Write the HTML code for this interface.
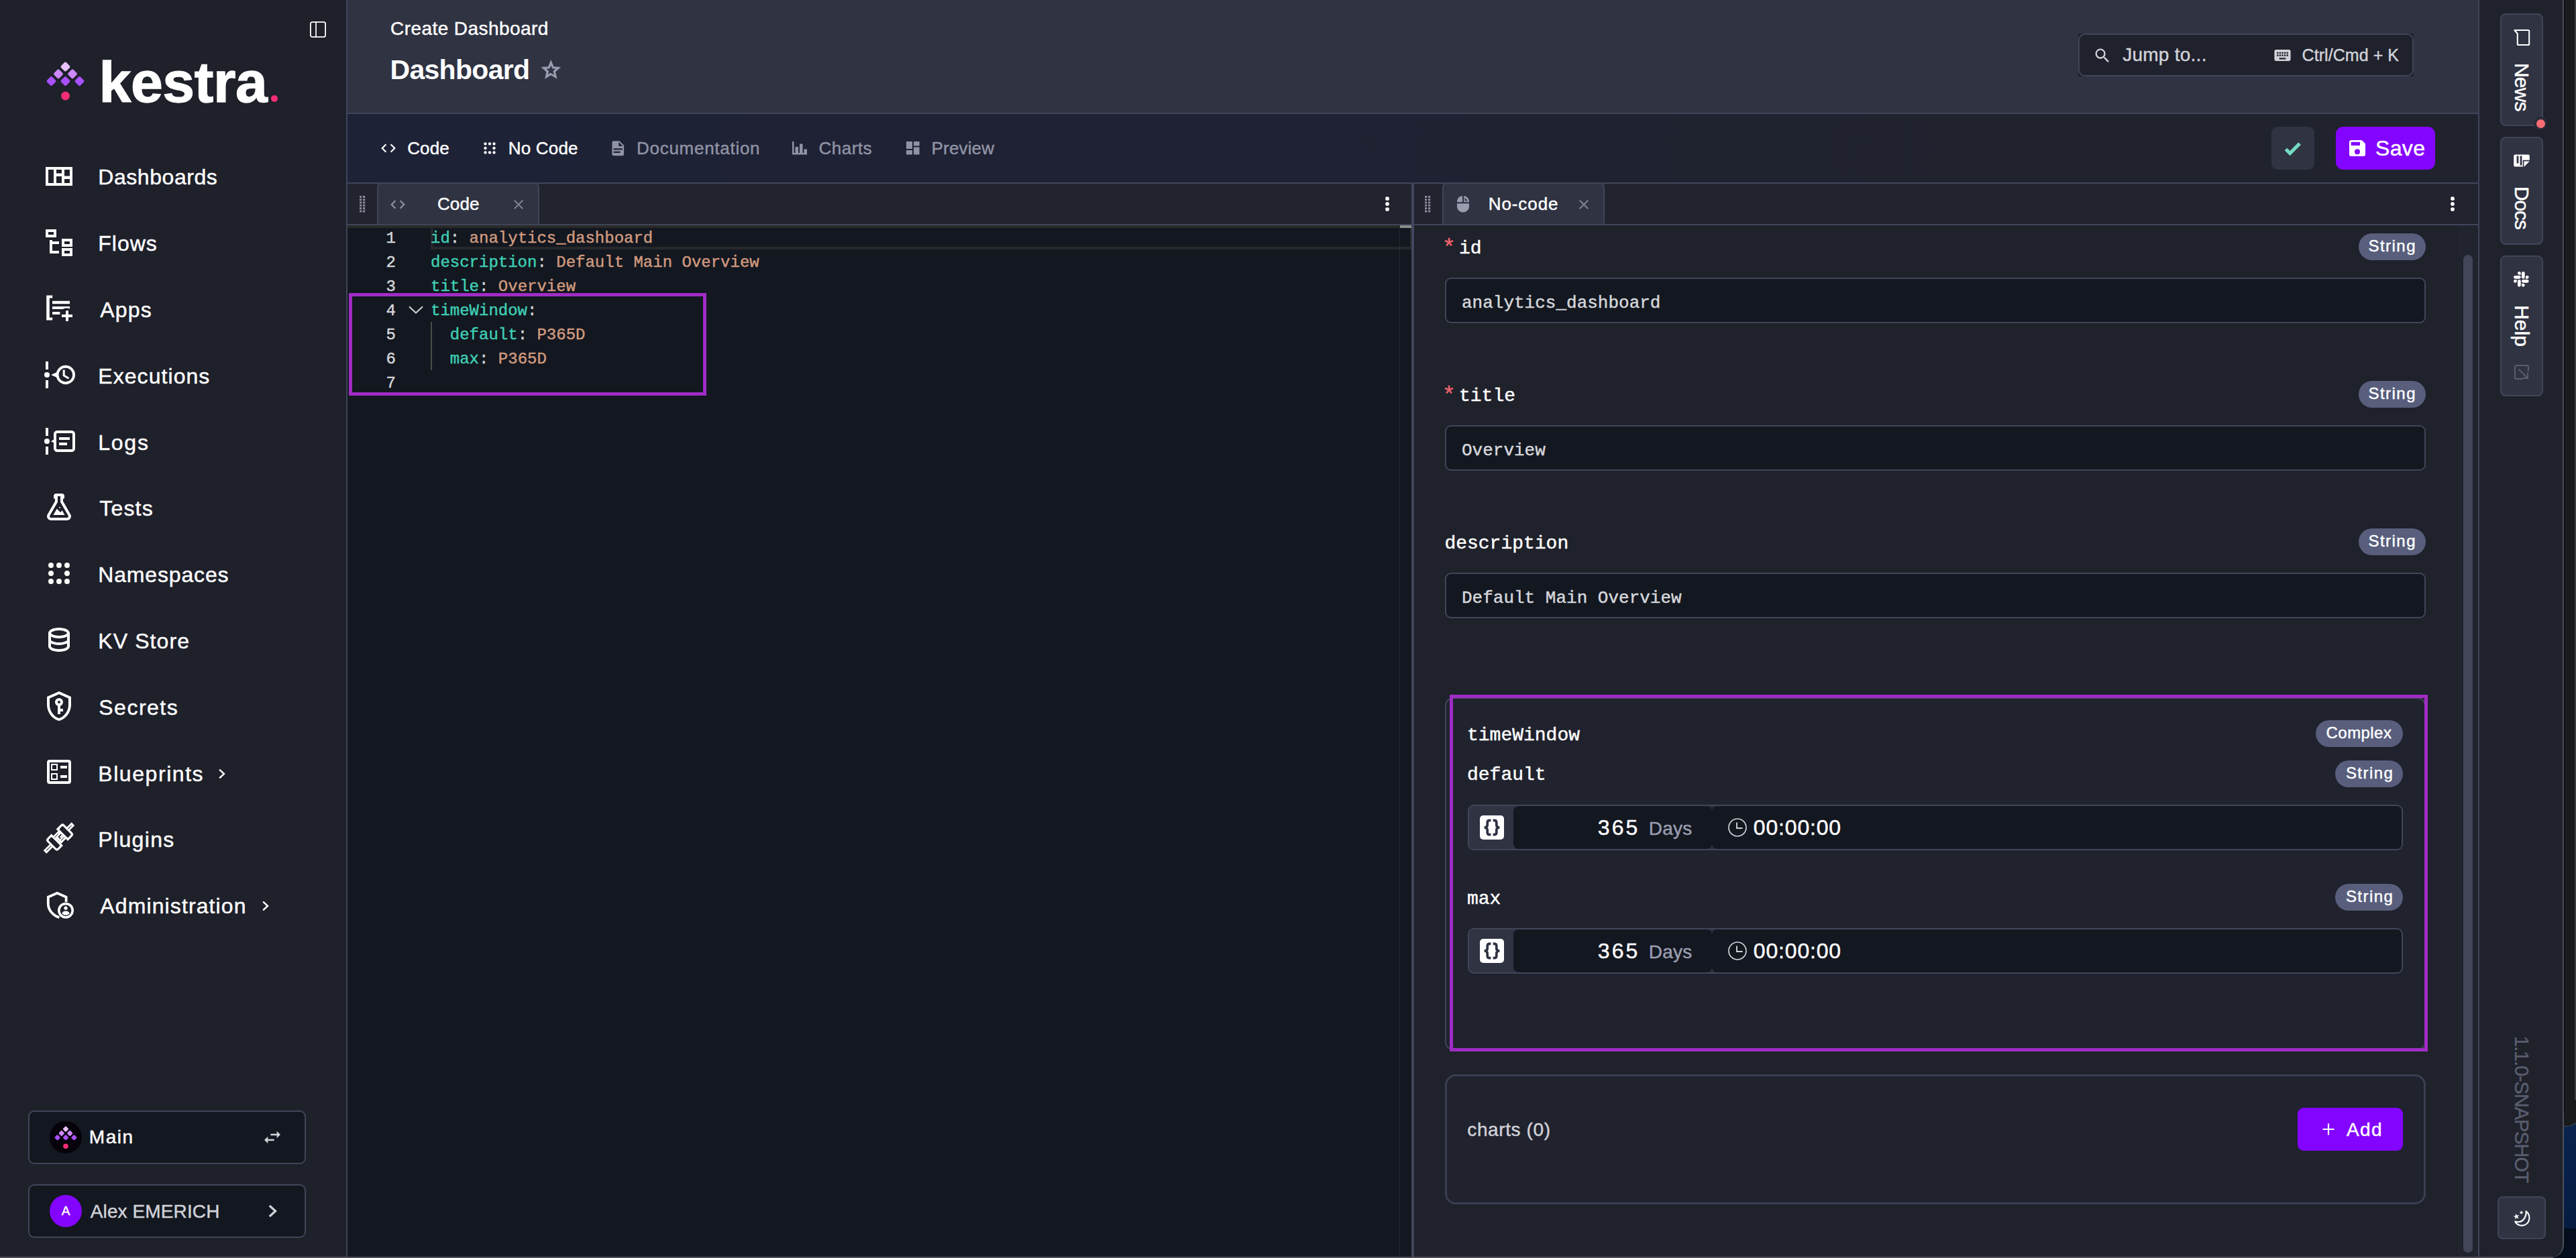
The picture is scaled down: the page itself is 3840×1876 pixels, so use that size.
<!DOCTYPE html>
<html lang="en"><head><meta charset="utf-8"><title>Create Dashboard - Kestra</title>
<style>
html,body{margin:0;padding:0}
body{width:3840px;height:1876px;position:relative;overflow:hidden;background:#1e202a;font-family:"Liberation Sans",sans-serif;}
body div,body span,body svg{position:absolute;box-sizing:border-box}
span{white-space:pre;-webkit-text-stroke:0.45px}
.code span{position:static}
</style></head><body>
<div style="left:0px;top:0px;width:516px;height:1876px;background:#1e202a"></div>
<div style="left:516px;top:0px;width:2px;height:1876px;background:#404559"></div>
<div style="left:518px;top:0px;width:3176px;height:168px;background:#2f3342"></div>
<div style="left:518px;top:168px;width:3176px;height:2px;background:#404559"></div>
<div style="left:518px;top:170px;width:3176px;height:102px;background:linear-gradient(90deg,#1e2236 0%,#1f2233 45%,#20222e 75%)"></div>
<div style="left:518px;top:272px;width:3176px;height:2px;background:#404559"></div>
<div style="left:518px;top:274px;width:3176px;height:60px;background:#21232f"></div>
<div style="left:518px;top:334px;width:3176px;height:2px;background:#404559"></div>
<div style="left:518px;top:336px;width:1586px;height:1538px;background:#131720"></div>
<div style="left:2104px;top:274px;width:4px;height:1600px;background:#41465c"></div>
<div style="left:2108px;top:336px;width:1586px;height:1538px;background:#1f212b"></div>
<div style="left:3664px;top:336px;width:30px;height:1538px;background:#21232e"></div>
<div style="left:3694px;top:0px;width:2px;height:1876px;background:#404559"></div>
<div style="left:3780px;top:0px;width:60px;height:1876px;background:linear-gradient(180deg,#09244f 0%,#09244f 89%,#061c42 97.5%)"></div>
<div style="left:3780px;top:1832px;width:60px;height:44px;background:#040d1b"></div>
<div style="left:3800px;top:0px;width:48px;height:1680px;background:#171b1e;border-radius:0 0 22px 0;border:1px solid #46494c;border-top:0"></div>
<div style="left:3822px;top:0px;width:1px;height:1660px;background:#000"></div>
<div style="left:3838px;top:0px;width:2px;height:1640px;background:#3a3d3f"></div>
<div style="left:3696px;top:0px;width:126px;height:1876px;background:#1f212b;border-radius:0 0 20px 0;border-right:2px solid #4d505b"></div>
<div style="left:0px;top:1874px;width:3806px;height:2px;background:#4c4e59"></div>
<svg style="left:462px;top:32px;" width="24" height="24" viewBox="0 0 24 24"><rect x="0.9" y="0.9" width="22.2" height="22.2" rx="2.6" fill="none" stroke="#fff" stroke-width="1.8"/><rect x="8.2" y="1" width="1.7" height="22" fill="#fff"/></svg>
<svg style="left:60px;top:80px;" width="80" height="80" viewBox="0 0 80 80"><rect x="31.98" y="14.08" width="11.03" height="11.03" rx="2.2" fill="#e9c1ff" transform="rotate(45 37.5 19.6)"/><rect x="21.48" y="24.78" width="11.03" height="11.03" rx="2.2" fill="#cd88ff" transform="rotate(45 27.0 30.3)"/><rect x="42.48" y="24.78" width="11.03" height="11.03" rx="2.2" fill="#cd88ff" transform="rotate(45 48.0 30.3)"/><rect x="10.98" y="35.48" width="11.03" height="11.03" rx="2.2" fill="#a950ff" transform="rotate(45 16.5 41.0)"/><rect x="31.98" y="35.48" width="11.03" height="11.03" rx="2.2" fill="#a950ff" transform="rotate(45 37.5 41.0)"/><rect x="52.98" y="35.48" width="11.03" height="11.03" rx="2.2" fill="#a950ff" transform="rotate(45 58.5 41.0)"/><circle cx="37.5" cy="63.0" r="6.40" fill="#f62e76"/></svg>
<span style="left:147.60px;top:79.20px;font-size:86px;line-height:86px;color:#ffffff;font-weight:700;-webkit-text-stroke:0;letter-spacing:-0.440px;-webkit-text-stroke:1.3px #fff;">kestra</span>
<div style="left:403.5px;top:141.7px;width:10.6px;height:10.6px;background:#f62e76;border-radius:50%"></div>
<span style="left:146.30px;top:248.41px;font-size:32px;line-height:32px;color:#ffffff;letter-spacing:0.556px;">Dashboards</span>
<span style="left:146.30px;top:347.21px;font-size:32px;line-height:32px;color:#ffffff;letter-spacing:1.000px;">Flows</span>
<span style="left:149.30px;top:446.01px;font-size:32px;line-height:32px;color:#ffffff;letter-spacing:1.200px;">Apps</span>
<span style="left:146.30px;top:544.81px;font-size:32px;line-height:32px;color:#ffffff;letter-spacing:1.056px;">Executions</span>
<span style="left:146.30px;top:643.61px;font-size:32px;line-height:32px;color:#ffffff;letter-spacing:1.733px;">Logs</span>
<span style="left:148.30px;top:742.41px;font-size:32px;line-height:32px;color:#ffffff;letter-spacing:1.175px;">Tests</span>
<span style="left:146.30px;top:841.21px;font-size:32px;line-height:32px;color:#ffffff;letter-spacing:0.833px;">Namespaces</span>
<span style="left:146.30px;top:940.01px;font-size:32px;line-height:32px;color:#ffffff;letter-spacing:1.100px;">KV Store</span>
<span style="left:147.30px;top:1038.81px;font-size:32px;line-height:32px;color:#ffffff;letter-spacing:1.483px;">Secrets</span>
<span style="left:146.30px;top:1137.61px;font-size:32px;line-height:32px;color:#ffffff;letter-spacing:1.556px;">Blueprints</span>
<span style="left:146.30px;top:1236.41px;font-size:32px;line-height:32px;color:#ffffff;letter-spacing:1.350px;">Plugins</span>
<span style="left:149.30px;top:1335.21px;font-size:32px;line-height:32px;color:#ffffff;letter-spacing:1.115px;">Administration</span>
<svg style="left:326px;top:1146px;" width="10" height="16" viewBox="0 0 10 15"><path d="M1.2 1.2L8 7.5L1.2 13.8" fill="none" stroke="#fff" stroke-width="2.4"/></svg>
<svg style="left:391px;top:1343px;" width="10" height="16" viewBox="0 0 10 15"><path d="M1.2 1.2L8 7.5L1.2 13.8" fill="none" stroke="#fff" stroke-width="2.4"/></svg>
<svg style="left:64px;top:238.90px" width="48" height="48" viewBox="0 0 24 24" fill="#fff"><path fill-rule="evenodd" d="M2 5H22V19H2ZM4 7V17H8V7ZM10 7V9.8H14V7ZM10 12V17H14V12ZM16 7V11.7H20V7ZM16 14V17H20V14Z"/></svg>
<svg style="left:64px;top:337.60px" width="48" height="48" viewBox="0 0 24 24" fill="#fff"><path d="M12 13H7V18H12V20H5V10H7V11H12V13M8 4V6H4V4H8M10 2H2V8H10V2M20 11V13H16V11H20M22 9H14V15H22V9M20 18V20H16V18H20M22 16H14V22H22V16Z"/></svg>
<svg style="left:64px;top:436.30px" width="48" height="48" viewBox="0 0 24 24" fill="#fff"><path d="M2.6 2.3H7.1V4.3H4.9V18.7H7.1V20.7H2.6Z"/><rect x="7" y="6.4" width="13" height="2.2"/><rect x="7" y="10.5" width="13" height="2"/><rect x="7" y="14.5" width="5.7" height="2"/><path d="M17 13.5H19V16.5H22V18.5H19V21.5H17V18.5H14V16.5H17Z"/><path d="M13.2 14.4 A5 5 0 0 1 20 12.3 L20 13 L13.2 15Z" fill="#1e202a"/></svg>
<svg style="left:64px;top:535.00px" width="48" height="48" viewBox="0 0 24 24" fill="#fff"><rect x="2" y="2" width="2" height="6"/><rect x="2" y="16" width="2" height="6"/><circle cx="3" cy="12" r="2"/><circle cx="16.9" cy="12" r="6.1" fill="none" stroke="#fff" stroke-width="2"/><path d="M6 12L10.4 10V14Z"/><circle cx="16.9" cy="12" r="5.1" fill="#1e202a"/><path d="M15.6 8.2V12.5L19.2 14.6" fill="none" stroke="#fff" stroke-width="1.5"/></svg>
<svg style="left:64px;top:633.70px" width="48" height="48" viewBox="0 0 24 24" fill="#fff"><rect x="2" y="2" width="2" height="6"/><rect x="2" y="16" width="2" height="6"/><circle cx="3" cy="12" r="2"/><path d="M6 12L9 10.3V13.7Z"/><rect x="9" y="5" width="14" height="14" rx="1.6" fill="#1e202a" stroke="#fff" stroke-width="2"/><rect x="12" y="9" width="8" height="2"/><rect x="12" y="13" width="6" height="2"/></svg>
<svg style="left:64px;top:732.40px" width="48" height="48" viewBox="0 0 24 24" fill="#fff"><path d="M5,19A1,1 0 0,0 6,20H18A1,1 0 0,0 19,19C19,18.79 18.93,18.59 18.82,18.43L13,8.35V4H11V8.35L5.18,18.43C5.07,18.59 5,18.79 5,19M6,22A3,3 0 0,1 3,19C3,18.4 3.18,17.84 3.5,17.37L9,7.81V6A1,1 0 0,1 8,5V4A2,2 0 0,1 10,2H14A2,2 0 0,1 16,4V5A1,1 0 0,1 15,6V7.81L20.5,17.37C20.82,17.84 21,18.4 21,19A3,3 0 0,1 18,22H6M13,16L14.34,14.66L16.27,18H7.73L10.39,13.39L13,16M12.5,12A0.5,0.5 0 0,1 13,12.5A0.5,0.5 0 0,1 12.5,13A0.5,0.5 0 0,1 12,12.5A0.5,0.5 0 0,1 12.5,12Z"/></svg>
<svg style="left:64px;top:831.10px" width="48" height="48" viewBox="0 0 24 24" fill="#fff"><circle cx="6" cy="6" r="2"/><circle cx="6" cy="12" r="2"/><circle cx="6" cy="18" r="2"/><circle cx="12" cy="6" r="2"/><circle cx="12" cy="18" r="2"/><circle cx="18" cy="6" r="2"/><circle cx="18" cy="12" r="2"/><circle cx="18" cy="18" r="2"/></svg>
<svg style="left:64px;top:929.80px" width="48" height="48" viewBox="0 0 24 24" fill="#fff"><path d="M12 3C7.58 3 4 4.79 4 7V17C4 19.21 7.59 21 12 21S20 19.21 20 17V7C20 4.79 16.42 3 12 3M18 17C18 17.5 15.87 19 12 19S6 17.5 6 17V14.77C7.61 15.55 9.72 16 12 16S16.39 15.55 18 14.77V17M18 12.45C16.7 13.4 14.42 14 12 14C9.58 14 7.3 13.4 6 12.45V9.64C7.47 10.47 9.61 11 12 11C14.39 11 16.53 10.47 18 9.64V12.45M12 9C8.13 9 6 7.5 6 7S8.13 5 12 5C15.87 5 18 6.5 18 7S15.87 9 12 9Z"/></svg>
<svg style="left:64px;top:1028.50px" width="48" height="48" viewBox="0 0 24 24" fill="#fff"><path d="M21,11C21,16.55 17.16,21.74 12,23C6.84,21.74 3,16.55 3,11V5L12,1L21,5V11M12,21C15.75,20 19,15.54 19,11.22V6.3L12,3.18L5,6.3V11.22C5,15.54 8.25,20 12,21M12,6A3,3 0 0,1 15,9C15,10.31 14.17,11.42 13,11.83V14H15V16H13V18H11V11.83C9.83,11.42 9,10.31 9,9A3,3 0 0,1 12,6M12,8A1,1 0 0,0 11,9A1,1 0 0,0 12,10A1,1 0 0,0 13,9A1,1 0 0,0 12,8Z"/></svg>
<svg style="left:64px;top:1127.20px" width="48" height="48" viewBox="0 0 24 24" fill="#fff"><path d="M13,7.5H18V9.5H13V7.5M13,14.5H18V16.5H13V14.5M19,3A2,2 0 0,1 21,5V19A2,2 0 0,1 19,21H5A2,2 0 0,1 3,19V5A2,2 0 0,1 5,3H19M19,19V5H5V19H19M11,6V11H6V6H11M10,10V7H7V10H10M11,13V18H6V13H11M10,17V14H7V17H10Z"/></svg>
<svg style="left:58px;top:1219.9px;" width="60" height="60" viewBox="0 0 60 60"><g transform="translate(29.8 29.8) rotate(-45)"><rect x="-29.4" y="-3.25" width="14" height="6.5" fill="#fff"/><rect x="-26.2" y="-0.45" width="10" height="0.9" fill="#1e202a"/><path d="M-12.5 -12.3H-3.4V12.3H-12.5A4 4 0 0 1 -16.5 8.3V-8.3A4 4 0 0 1 -12.5 -12.3Z" fill="#fff"/><rect x="-13.4" y="-9.2" width="6.9" height="18.4" rx="1.6" fill="#1e202a"/><rect x="-3.6" y="-8.2" width="10.2" height="5.9" fill="#fff"/><rect x="-3.6" y="2.3" width="10.2" height="5.9" fill="#fff"/><rect x="-3.6" y="-2.4" width="4.2" height="4.8" fill="#fff"/><rect x="-3.6" y="-5.6" width="7.4" height="0.8" fill="#1e202a"/><rect x="-0.4" y="4.4" width="6.8" height="0.8" fill="#1e202a"/><rect x="0.6" y="-1.6" width="3.6" height="3.2" fill="#1e202a"/><rect x="2" y="-0.6" width="4.6" height="2.9" fill="#fff"/><path d="M6.4 -12.3H16A4 4 0 0 1 20 -8.3V8.3A4 4 0 0 1 16 12.3H6.4Z" fill="#fff"/><rect x="9.6" y="-9.2" width="7.2" height="18.4" rx="1.6" fill="#1e202a"/><rect x="19.6" y="-3.25" width="10.3" height="6.5" fill="#fff"/><rect x="19.6" y="-0.45" width="7.4" height="0.9" fill="#1e202a"/></g></svg>
<svg style="left:64px;top:1324.60px" width="48" height="48" viewBox="0 0 24 24" fill="#fff"><path d="M12.2 21.6C8 20.4 3.9 16.4 3.9 11.4V6.4L10.6 3.4L17.3 6.4V10" fill="none" stroke="#fff" stroke-width="1.9"/><circle cx="17" cy="16.4" r="5.1" fill="#1e202a" stroke="#fff" stroke-width="1.8"/><circle cx="17" cy="14.6" r="1.3"/><path d="M14.2 18.6C14.6 17.2 15.8 16.8 17 16.8S19.4 17.2 19.8 18.6C19 19.5 18 19.9 17 19.9S15 19.5 14.2 18.6Z"/></svg>
<div style="left:42px;top:1656px;width:414px;height:80px;background:#131720;border:2px solid #404559;border-radius:9px"></div>
<div style="left:42px;top:1766px;width:414px;height:80px;background:#131720;border:2px solid #404559;border-radius:9px"></div>
<div style="left:74px;top:1672px;width:48px;height:48px;background:#05020a;border-radius:50%"></div>
<svg style="left:74px;top:1672px;" width="48" height="48" viewBox="0 0 48 48"><rect x="20.75" y="8.45" width="6.51" height="6.51" rx="1.298" fill="#e9c1ff" transform="rotate(45 24 11.7)"/><rect x="14.55" y="14.76" width="6.51" height="6.51" rx="1.298" fill="#cd88ff" transform="rotate(45 17.805 18.012999999999998)"/><rect x="26.94" y="14.76" width="6.51" height="6.51" rx="1.298" fill="#cd88ff" transform="rotate(45 30.195 18.012999999999998)"/><rect x="8.36" y="21.07" width="6.51" height="6.51" rx="1.298" fill="#a950ff" transform="rotate(45 11.610000000000001 24.325999999999997)"/><rect x="20.75" y="21.07" width="6.51" height="6.51" rx="1.298" fill="#a950ff" transform="rotate(45 24.0 24.325999999999997)"/><rect x="33.14" y="21.07" width="6.51" height="6.51" rx="1.298" fill="#a950ff" transform="rotate(45 36.39 24.325999999999997)"/><circle cx="24" cy="37.306" r="3.78" fill="#f62e76"/></svg>
<span style="left:132.80px;top:1682.30px;font-size:28px;line-height:28px;color:#ffffff;letter-spacing:1.567px;">Main</span>
<svg style="left:390px;top:1680px" width="32" height="32" viewBox="0 0 24 24"><path fill="#d1d2d8" d="M21,9L17,5V8H10V10H17V13M7,11L3,15L7,19V16H14V14H7V11Z"/></svg>
<div style="left:74px;top:1782px;width:48px;height:48px;background:#8405ff;border-radius:50%"></div>
<span style="left:91.80px;top:1796.22px;font-size:19px;line-height:19px;color:#ffffff;">A</span>
<span style="left:134.80px;top:1792.50px;font-size:28px;line-height:28px;color:#d1d2d8;letter-spacing:0.109px;">Alex EMERICH</span>
<svg style="left:400px;top:1796px;" width="14" height="20" viewBox="0 0 14 19.6"><path d="M1.8 1.8L10.6 9.8L1.8 17.8" fill="none" stroke="#d1d2d8" stroke-width="3.2"/></svg>
<span style="left:582.00px;top:28.50px;font-size:28px;line-height:28px;color:#ffffff;letter-spacing:0.433px;">Create Dashboard</span>
<span style="left:581.50px;top:83.99px;font-size:41px;line-height:41px;color:#ffffff;font-weight:700;-webkit-text-stroke:0;letter-spacing:-0.700px;">Dashboard</span>
<svg style="left:804.6px;top:87.5px" width="32.6" height="32.6" viewBox="0 0 24 24"><path fill="#9b9cb1" stroke="#9b9cb1" stroke-width="0.8" stroke-linejoin="miter" d="M12,15.39L8.24,17.66L9.23,13.38L5.91,10.5L10.29,10.13L12,6.09L13.71,10.13L18.09,10.5L14.77,13.38L15.76,17.66M22,9.24L14.81,8.63L12,2L9.19,8.63L2,9.24L7.45,13.97L5.82,21L12,17.27L18.18,21L16.54,13.97L22,9.24Z"/></svg>
<div style="left:3098px;top:50px;width:500px;height:64px;background:#1f212c"></div>
<div style="left:3098px;top:50px;width:500px;height:64px;border:2px solid #404559;border-radius:10px"></div>
<svg style="left:3120.00px;top:68.50px;" width="28" height="28" viewBox="0 0 24 24"><path fill="#d1d2d8" d="M9.5,3A6.5,6.5 0 0,1 16,9.5C16,11.11 15.41,12.59 14.44,13.73L14.71,14H15.5L20.5,19L19,20.5L14,15.5V14.71L13.73,14.44C12.59,15.41 11.11,16 9.5,16A6.5,6.5 0 0,1 3,9.5A6.5,6.5 0 0,1 9.5,3M9.5,5C7,5 5,7 5,9.5C5,12 7,14 9.5,14C12,14 14,12 14,9.5C14,7 12,5 9.5,5Z"/></svg>
<span style="left:3164.20px;top:68.30px;font-size:28px;line-height:28px;color:#d1d2d8;letter-spacing:0.256px;">Jump to...</span>
<svg style="left:3387.50px;top:67.50px;" width="29" height="29" viewBox="0 0 24 24"><path fill="#d1d2d8" d="M19,10H17V8H19M19,13H17V11H19M16,10H14V8H16M16,13H14V11H16M16,17H8V15H16M7,10H5V8H7M7,13H5V11H7M8,11H10V13H8M8,8H10V10H8M11,11H13V13H11M11,8H13V10H11M20,5H4C2.89,5 2,5.89 2,7V17A2,2 0 0,0 4,19H20A2,2 0 0,0 22,17V7C22,5.89 21.1,5 20,5Z"/></svg>
<span style="left:3431.60px;top:70.34px;font-size:25px;line-height:25px;color:#d1d2d8;letter-spacing:0.055px;">Ctrl/Cmd + K</span>
<svg style="left:565.80px;top:208.00px;" width="26" height="26" viewBox="0 0 24 24"><path fill="#ffffff" d="M14.6,16.6L19.2,12L14.6,7.4L16,6L22,12L16,18L14.6,16.6M9.4,16.6L4.8,12L9.4,7.4L8,6L2,12L8,18L9.4,16.6Z"/></svg>
<span style="left:607.20px;top:207.99px;font-size:26px;line-height:26px;color:#ffffff;letter-spacing:0.133px;">Code</span>
<svg style="left:716.65px;top:207.9px" width="26" height="26" viewBox="0 0 24 24" fill="#fff"><circle cx="6" cy="6" r="2"/><circle cx="6" cy="12" r="2"/><circle cx="6" cy="18" r="2"/><circle cx="12" cy="6" r="2"/><circle cx="12" cy="18" r="2"/><circle cx="18" cy="6" r="2"/><circle cx="18" cy="12" r="2"/><circle cx="18" cy="18" r="2"/></svg>
<span style="left:757.80px;top:207.99px;font-size:26px;line-height:26px;color:#ffffff;letter-spacing:0.183px;">No Code</span>
<svg style="left:908.25px;top:207.95px;" width="26.5" height="26.5" viewBox="0 0 24 24"><path fill="#9093a5" d="M13,9H18.5L13,3.5V9M6,2H14L20,8V20A2,2 0 0,1 18,22H6C4.89,22 4,21.1 4,20V4C4,2.89 4.89,2 6,2M15,18V16H6V18H15M18,14V12H6V14H18Z"/></svg>
<span style="left:949.00px;top:207.99px;font-size:26px;line-height:26px;color:#9093a5;letter-spacing:0.725px;">Documentation</span>
<svg style="left:1181px;top:211px;" width="22" height="20" viewBox="0 0 22 20"><path fill="#9093a5" d="M0 0H2.5V17H4.5V8H9V17H11V3.5H15.5V17H17.5V11.5H22V19.5H0Z"/></svg>
<span style="left:1220.50px;top:207.99px;font-size:26px;line-height:26px;color:#9093a5;letter-spacing:0.500px;">Charts</span>
<svg style="left:1351px;top:211px;" width="20" height="20" viewBox="0 0 20 20"><path fill="#9093a5" d="M0 0H9V11H0ZM0 13H9V19.6H0ZM11 0H19.6V6.5H11ZM11 8.5H19.6V19.6H11Z"/></svg>
<span style="left:1388.60px;top:207.99px;font-size:26px;line-height:26px;color:#9093a5;letter-spacing:0.150px;">Preview</span>
<div style="left:3386px;top:189px;width:64px;height:64px;background:#2f3342;border-radius:9px"></div>
<svg style="left:3402.45px;top:205.55px;" width="30.9" height="30.9" viewBox="0 0 24 24"><path fill="#75dbc2" d="M9,20.42L2.79,14.21L5.62,11.38L9,14.77L18.88,4.88L21.71,7.71L9,20.42Z"/></svg>
<div style="left:3482px;top:189px;width:148px;height:64px;background:#8405ff;border-radius:11px"></div>
<svg style="left:3498.00px;top:205.00px;" width="32" height="32" viewBox="0 0 24 24"><path fill="#ffffff" d="M15,9H5V5H15M12,19A3,3 0 0,1 9,16A3,3 0 0,1 12,13A3,3 0 0,1 15,16A3,3 0 0,1 12,19M17,3H5C3.89,3 3,3.9 3,5V19A2,2 0 0,0 5,21H19A2,2 0 0,0 21,19V7L17,3Z"/></svg>
<span style="left:3541.10px;top:205.11px;font-size:32px;line-height:32px;color:#ffffff;letter-spacing:0.300px;">Save</span>
<svg style="left:536px;top:292px;" width="9" height="25" viewBox="0 0 9 25"><rect x="0" y="0.0" width="3.2" height="3" fill="#8a8c9c"/><rect x="0" y="4.3" width="3.2" height="3" fill="#8a8c9c"/><rect x="0" y="8.6" width="3.2" height="3" fill="#8a8c9c"/><rect x="0" y="12.9" width="3.2" height="3" fill="#8a8c9c"/><rect x="0" y="17.2" width="3.2" height="3" fill="#8a8c9c"/><rect x="0" y="21.5" width="3.2" height="3" fill="#8a8c9c"/><rect x="5" y="0.0" width="3.2" height="3" fill="#8a8c9c"/><rect x="5" y="4.3" width="3.2" height="3" fill="#8a8c9c"/><rect x="5" y="8.6" width="3.2" height="3" fill="#8a8c9c"/><rect x="5" y="12.9" width="3.2" height="3" fill="#8a8c9c"/><rect x="5" y="17.2" width="3.2" height="3" fill="#8a8c9c"/><rect x="5" y="21.5" width="3.2" height="3" fill="#8a8c9c"/></svg>
<div style="left:562px;top:272px;width:242px;height:62px;background:#2f3342;border:2px solid #404559;border-bottom:0;border-radius:7px 7px 0 0"></div>
<svg style="left:579.80px;top:291.60px;" width="26" height="26" viewBox="0 0 24 24"><path fill="#9093a5" d="M14.6,16.6L19.2,12L14.6,7.4L16,6L22,12L16,18L14.6,16.6M9.4,16.6L4.8,12L9.4,7.4L8,6L2,12L8,18L9.4,16.6Z"/></svg>
<span style="left:651.90px;top:291.29px;font-size:26px;line-height:26px;color:#ffffff;letter-spacing:0.133px;">Code</span>
<svg style="left:760.80px;top:292.60px;" width="24" height="24" viewBox="0 0 24 24"><path fill="#7f8294" d="M19,6.41L17.59,5L12,10.59L6.41,5L5,6.41L10.59,12L5,17.59L6.41,19L12,13.41L17.59,19L19,17.59L13.41,12L19,6.41Z"/></svg>
<svg style="left:2064px;top:292px;fill:#fff" width="8" height="26" viewBox="0 0 8 26"><circle cx="4" cy="4.2" r="2.9"/><circle cx="4" cy="12.1" r="2.9"/><circle cx="4" cy="20.1" r="2.9"/></svg>
<svg style="left:2124px;top:292px;" width="9" height="25" viewBox="0 0 9 25"><rect x="0" y="0.0" width="3.2" height="3" fill="#8a8c9c"/><rect x="0" y="4.3" width="3.2" height="3" fill="#8a8c9c"/><rect x="0" y="8.6" width="3.2" height="3" fill="#8a8c9c"/><rect x="0" y="12.9" width="3.2" height="3" fill="#8a8c9c"/><rect x="0" y="17.2" width="3.2" height="3" fill="#8a8c9c"/><rect x="0" y="21.5" width="3.2" height="3" fill="#8a8c9c"/><rect x="5" y="0.0" width="3.2" height="3" fill="#8a8c9c"/><rect x="5" y="4.3" width="3.2" height="3" fill="#8a8c9c"/><rect x="5" y="8.6" width="3.2" height="3" fill="#8a8c9c"/><rect x="5" y="12.9" width="3.2" height="3" fill="#8a8c9c"/><rect x="5" y="17.2" width="3.2" height="3" fill="#8a8c9c"/><rect x="5" y="21.5" width="3.2" height="3" fill="#8a8c9c"/></svg>
<div style="left:2150px;top:272px;width:242px;height:62px;background:#2f3342;border:2px solid #404559;border-bottom:0;border-radius:7px 7px 0 0"></div>
<svg style="left:2172px;top:292px;" width="18" height="25" viewBox="0 0 18 25"><path fill="#9b9cb0" d="M0 9.2C0 3.8 3.4 0.6 7.9 0.2V9.2ZM10.1 0.2C14.6 0.6 18 3.8 18 9.2H10.1ZM0 11.4H18V15.5C18 20.8 14 24.6 9 24.6S0 20.8 0 15.5Z"/><path d="M11.6 2.6L15.6 7.6H11.6Z" fill="#2f3342"/></svg>
<span style="left:2218.70px;top:291.29px;font-size:26px;line-height:26px;color:#ffffff;letter-spacing:0.917px;">No-code</span>
<svg style="left:2348.50px;top:292.60px;" width="24" height="24" viewBox="0 0 24 24"><path fill="#7f8294" d="M19,6.41L17.59,5L12,10.59L6.41,5L5,6.41L10.59,12L5,17.59L6.41,19L12,13.41L17.59,19L19,17.59L13.41,12L19,6.41Z"/></svg>
<svg style="left:3652px;top:292px;fill:#fff" width="8" height="26" viewBox="0 0 8 26"><circle cx="4" cy="4.2" r="2.9"/><circle cx="4" cy="12.1" r="2.9"/><circle cx="4" cy="20.1" r="2.9"/></svg>
<div style="left:642px;top:336px;width:1462px;height:36px;border:4px solid #27282b;border-right-width:2px"></div>
<div style="left:518px;top:336px;width:1569px;height:4px;background:#2a2a2a"></div>
<div style="left:2087px;top:336px;width:17px;height:4px;background:#8b8b8b"></div>
<div style="left:2086px;top:336px;width:1px;height:1538px;background:#272a36"></div>
<span style="left:518px;width:72px;text-align:right;top:343.62px;font-size:24px;line-height:24px;color:#d6d7d9;font-family:&quot;Liberation Mono&quot;,monospace;">1</span>
<span class="code" style="left:642px;top:343.62px;font-size:24px;line-height:24px;font-family:&quot;Liberation Mono&quot;,monospace;"><span style="color:#3fcfb4">id</span><span style="color:#d4d4d4">:</span><span style="color:#d19a7e"> analytics_dashboard</span></span>
<span style="left:518px;width:72px;text-align:right;top:379.62px;font-size:24px;line-height:24px;color:#d6d7d9;font-family:&quot;Liberation Mono&quot;,monospace;">2</span>
<span class="code" style="left:642px;top:379.62px;font-size:24px;line-height:24px;font-family:&quot;Liberation Mono&quot;,monospace;"><span style="color:#3fcfb4">description</span><span style="color:#d4d4d4">:</span><span style="color:#d19a7e"> Default Main Overview</span></span>
<span style="left:518px;width:72px;text-align:right;top:415.62px;font-size:24px;line-height:24px;color:#d6d7d9;font-family:&quot;Liberation Mono&quot;,monospace;">3</span>
<span class="code" style="left:642px;top:415.62px;font-size:24px;line-height:24px;font-family:&quot;Liberation Mono&quot;,monospace;"><span style="color:#3fcfb4">title</span><span style="color:#d4d4d4">:</span><span style="color:#d19a7e"> Overview</span></span>
<span style="left:518px;width:72px;text-align:right;top:451.62px;font-size:24px;line-height:24px;color:#d6d7d9;font-family:&quot;Liberation Mono&quot;,monospace;">4</span>
<span class="code" style="left:642px;top:451.62px;font-size:24px;line-height:24px;font-family:&quot;Liberation Mono&quot;,monospace;"><span style="color:#3fcfb4">timeWindow</span><span style="color:#d4d4d4">:</span></span>
<span style="left:518px;width:72px;text-align:right;top:487.62px;font-size:24px;line-height:24px;color:#d6d7d9;font-family:&quot;Liberation Mono&quot;,monospace;">5</span>
<span class="code" style="left:642px;top:487.62px;font-size:24px;line-height:24px;font-family:&quot;Liberation Mono&quot;,monospace;"><span style="color:#3fcfb4">  default</span><span style="color:#d4d4d4">:</span><span style="color:#d19a7e"> P365D</span></span>
<span style="left:518px;width:72px;text-align:right;top:523.62px;font-size:24px;line-height:24px;color:#d6d7d9;font-family:&quot;Liberation Mono&quot;,monospace;">6</span>
<span class="code" style="left:642px;top:523.62px;font-size:24px;line-height:24px;font-family:&quot;Liberation Mono&quot;,monospace;"><span style="color:#3fcfb4">  max</span><span style="color:#d4d4d4">:</span><span style="color:#d19a7e"> P365D</span></span>
<span style="left:518px;width:72px;text-align:right;top:559.62px;font-size:24px;line-height:24px;color:#d6d7d9;font-family:&quot;Liberation Mono&quot;,monospace;">7</span>
<svg style="left:609px;top:456px;" width="22" height="12" viewBox="0 0 22 12"><path d="M1 1.2L11 10.6L21 1.2" fill="none" stroke="#d0d0d0" stroke-width="2"/></svg>
<div style="left:642px;top:480px;width:1.6px;height:72px;background:#4b4b4b"></div>
<div style="left:520px;top:437px;width:533px;height:153px;border:5px solid #a02cc4"></div>
<span style="left:2153.30px;top:348.72px;font-size:34px;line-height:34px;color:#e8616b;">*</span>
<span style="left:2175px;top:356.55px;font-size:28px;line-height:28px;color:#ffffff;font-family:&quot;Liberation Mono&quot;,monospace;">id</span>
<div style="left:3516px;top:348px;width:100px;height:40px;background:#585e7c;border-radius:20px"></div>
<span style="left:3530.50px;top:355.28px;font-size:24px;line-height:24px;color:#ffffff;letter-spacing:1.460px;">String</span>
<div style="left:2154px;top:414px;width:1462px;height:68px;background:#131720;border:2px solid #404559;border-radius:9px"></div>
<span style="left:2179px;top:439.38px;font-size:26px;line-height:26px;color:#d6d7dc;font-family:&quot;Liberation Mono&quot;,monospace;">analytics_dashboard</span>
<span style="left:2153.30px;top:568.72px;font-size:34px;line-height:34px;color:#e8616b;">*</span>
<span style="left:2175px;top:576.55px;font-size:28px;line-height:28px;color:#ffffff;font-family:&quot;Liberation Mono&quot;,monospace;">title</span>
<div style="left:3516px;top:568px;width:100px;height:40px;background:#585e7c;border-radius:20px"></div>
<span style="left:3530.50px;top:575.28px;font-size:24px;line-height:24px;color:#ffffff;letter-spacing:1.460px;">String</span>
<div style="left:2154px;top:634px;width:1462px;height:68px;background:#131720;border:2px solid #404559;border-radius:9px"></div>
<span style="left:2179px;top:659.38px;font-size:26px;line-height:26px;color:#d6d7dc;font-family:&quot;Liberation Mono&quot;,monospace;">Overview</span>
<span style="left:2153.4px;top:796.55px;font-size:28px;line-height:28px;color:#ffffff;font-family:&quot;Liberation Mono&quot;,monospace;">description</span>
<div style="left:3516px;top:788px;width:100px;height:40px;background:#585e7c;border-radius:20px"></div>
<span style="left:3530.50px;top:795.28px;font-size:24px;line-height:24px;color:#ffffff;letter-spacing:1.460px;">String</span>
<div style="left:2154px;top:854px;width:1462px;height:68px;background:#131720;border:2px solid #404559;border-radius:9px"></div>
<span style="left:2179px;top:879.38px;font-size:26px;line-height:26px;color:#d6d7dc;font-family:&quot;Liberation Mono&quot;,monospace;">Default Main Overview</span>
<div style="left:3672px;top:380px;width:14px;height:1488px;background:#434659;border-radius:7px"></div>
<div style="left:2154px;top:1040px;width:1462px;height:526px;background:#20222e;border:2px solid #404559;border-radius:12px"></div>
<span style="left:2187px;top:1082.55px;font-size:28px;line-height:28px;color:#ffffff;font-family:&quot;Liberation Mono&quot;,monospace;">timeWindow</span>
<div style="left:3452px;top:1074px;width:130px;height:40px;background:#585e7c;border-radius:20px"></div>
<span style="left:3467.60px;top:1080.98px;font-size:24px;line-height:24px;color:#ffffff;letter-spacing:0.433px;">Complex</span>
<span style="left:2187px;top:1142.35px;font-size:28px;line-height:28px;color:#ffffff;font-family:&quot;Liberation Mono&quot;,monospace;">default</span>
<div style="left:3481px;top:1134px;width:101px;height:40px;background:#585e7c;border-radius:20px"></div>
<span style="left:3496.90px;top:1140.68px;font-size:24px;line-height:24px;color:#ffffff;letter-spacing:1.460px;">String</span>
<div style="left:2188px;top:1200px;width:1394px;height:68px;background:#2b2e3c;border:2px solid #404559;border-radius:9px;overflow:hidden"><div style="left:0;top:0;width:74px;height:64px;background:#2f3342"></div><div style="left:66px;top:0;width:296px;height:64px;background:#131720;border-radius:8px"></div><div style="left:362px;top:0;width:1028px;height:64px;background:#131720;border-radius:8px 0 0 8px"></div></div>
<div style="left:2206px;top:1216px;width:36px;height:36px;background:#fff;border-radius:5px"></div>
<svg style="left:2206px;top:1216px;" width="36" height="36" viewBox="0 0 36 36"><path d="M16.4 7.4H14.6Q11.2 7.4 11.2 10.8V14.2Q11.2 18 6.6 18Q11.2 18 11.2 21.8V25.2Q11.2 28.6 14.6 28.6H16.4M19.6 7.4H21.4Q24.8 7.4 24.8 10.8V14.2Q24.8 18 29.4 18Q24.8 18 24.8 21.8V25.2Q24.8 28.6 21.4 28.6H19.6" fill="none" stroke="#2f3342" stroke-width="3.7"/></svg>
<span style="left:2381.80px;top:1218.21px;font-size:32px;line-height:32px;color:#ffffff;letter-spacing:3.100px;">365</span>
<span style="left:2457.70px;top:1221.60px;font-size:28px;line-height:28px;color:#9a9caf;letter-spacing:0.233px;">Days</span>
<svg style="left:2576px;top:1220px;" width="28" height="28" viewBox="0 0 28 28"><circle cx="14" cy="14" r="13" fill="none" stroke="#d1d2d8" stroke-width="1.7"/><path d="M13 6.6V15H21.6" fill="none" stroke="#d1d2d8" stroke-width="1.9"/></svg>
<span style="left:2613.80px;top:1218.21px;font-size:32px;line-height:32px;color:#ffffff;letter-spacing:0.829px;">00:00:00</span>
<span style="left:2187px;top:1326.55px;font-size:28px;line-height:28px;color:#ffffff;font-family:&quot;Liberation Mono&quot;,monospace;">max</span>
<div style="left:3481px;top:1318px;width:101px;height:40px;background:#585e7c;border-radius:20px"></div>
<span style="left:3496.90px;top:1324.68px;font-size:24px;line-height:24px;color:#ffffff;letter-spacing:1.460px;">String</span>
<div style="left:2188px;top:1384px;width:1394px;height:68px;background:#2b2e3c;border:2px solid #404559;border-radius:9px;overflow:hidden"><div style="left:0;top:0;width:74px;height:64px;background:#2f3342"></div><div style="left:66px;top:0;width:296px;height:64px;background:#131720;border-radius:8px"></div><div style="left:362px;top:0;width:1028px;height:64px;background:#131720;border-radius:8px 0 0 8px"></div></div>
<div style="left:2206px;top:1400px;width:36px;height:36px;background:#fff;border-radius:5px"></div>
<svg style="left:2206px;top:1400px;" width="36" height="36" viewBox="0 0 36 36"><path d="M16.4 7.4H14.6Q11.2 7.4 11.2 10.8V14.2Q11.2 18 6.6 18Q11.2 18 11.2 21.8V25.2Q11.2 28.6 14.6 28.6H16.4M19.6 7.4H21.4Q24.8 7.4 24.8 10.8V14.2Q24.8 18 29.4 18Q24.8 18 24.8 21.8V25.2Q24.8 28.6 21.4 28.6H19.6" fill="none" stroke="#2f3342" stroke-width="3.7"/></svg>
<span style="left:2381.80px;top:1402.21px;font-size:32px;line-height:32px;color:#ffffff;letter-spacing:3.100px;">365</span>
<span style="left:2457.70px;top:1405.60px;font-size:28px;line-height:28px;color:#9a9caf;letter-spacing:0.233px;">Days</span>
<svg style="left:2576px;top:1404px;" width="28" height="28" viewBox="0 0 28 28"><circle cx="14" cy="14" r="13" fill="none" stroke="#d1d2d8" stroke-width="1.7"/><path d="M13 6.6V15H21.6" fill="none" stroke="#d1d2d8" stroke-width="1.9"/></svg>
<span style="left:2613.80px;top:1402.21px;font-size:32px;line-height:32px;color:#ffffff;letter-spacing:0.829px;">00:00:00</span>
<div style="left:2161px;top:1036px;width:1458px;height:532px;border:5px solid #a02cc4"></div>
<div style="left:2154px;top:1602px;width:1462px;height:194px;background:#20222e;border:3px solid #3a3e50;border-radius:16px"></div>
<span style="left:2187.30px;top:1671.00px;font-size:28px;line-height:28px;color:#d1d2d8;letter-spacing:0.611px;">charts (0)</span>
<div style="left:3425px;top:1652px;width:157px;height:64px;background:#8405ff;border-radius:9px"></div>
<svg style="left:3462px;top:1675px;" width="18" height="18" viewBox="0 0 18 18"><path d="M9 0.5V17.5M0.5 9H17.5" stroke="#fff" stroke-width="2.2"/></svg>
<span style="left:3498.00px;top:1670.70px;font-size:28px;line-height:28px;color:#ffffff;letter-spacing:1.400px;">Add</span>
<div style="left:3727px;top:20px;width:64px;height:168px;background:#2f3342;border:2px solid #404559;border-radius:8px"></div>
<div style="left:3727px;top:204px;width:64px;height:161px;background:#2f3342;border:2px solid #404559;border-radius:8px"></div>
<div style="left:3727px;top:381px;width:64px;height:210px;background:#2f3342;border:2px solid #404559;border-radius:8px"></div>
<svg style="left:3746px;top:42px;" width="27" height="28" viewBox="0 0 27 28"><path d="M2.4 3H22.6A1.6 1.6 0 0 1 24.2 4.6V23.4A1.6 1.6 0 0 1 22.6 25H8.4A1.6 1.6 0 0 1 6.8 23.4V8.2Z" fill="none" stroke="#fff" stroke-width="2.1" stroke-linejoin="round"/></svg>
<span style="left:3773.70px;top:94.00px;font-size:30px;line-height:30px;color:#ffffff;transform-origin:0 0;transform:rotate(90deg);letter-spacing:-0.833px;">News</span>
<div style="left:3777px;top:174px;width:20px;height:20px;background:#2a2c3a;border-radius:50%"></div>
<div style="left:3780.5px;top:177.5px;width:13px;height:13px;background:#fb6c73;border-radius:50%"></div>
<svg style="left:3747px;top:230px;" width="24" height="19" viewBox="0 0 24 19"><path d="M2.4 0.4H21.6A2.2 2.2 0 0 1 23.8 2.6V10.6L15.8 18.6H2.4A2.2 2.2 0 0 1 0.2 16.4V2.6A2.2 2.2 0 0 1 2.4 0.4Z" fill="#fff"/><path d="M4.6 2.6H7.4V13.6H4.6ZM9.6 2.6H12.4V16.4H9.6Z" fill="#2f3342"/><path d="M14.6 18.8V9.6H24" fill="none" stroke="#2f3342" stroke-width="1.7"/></svg>
<span style="left:3773.70px;top:277.80px;font-size:30px;line-height:30px;color:#ffffff;transform-origin:0 0;transform:rotate(90deg);letter-spacing:-1.233px;">Docs</span>
<svg style="left:3747.2px;top:405.2px" width="22.7" height="22.7" viewBox="2 3 19 19"><path fill="#fff" d="M6,15A2,2 0 0,1 4,17A2,2 0 0,1 2,15A2,2 0 0,1 4,13H6V15M7,15A2,2 0 0,1 9,13A2,2 0 0,1 11,15V20A2,2 0 0,1 9,22A2,2 0 0,1 7,20V15M9,7A2,2 0 0,1 7,5A2,2 0 0,1 9,3A2,2 0 0,1 11,5V7H9M9,8A2,2 0 0,1 11,10A2,2 0 0,1 9,12H4A2,2 0 0,1 2,10A2,2 0 0,1 4,8H9M17,10A2,2 0 0,1 19,8A2,2 0 0,1 21,10A2,2 0 0,1 19,12H17V10M16,10A2,2 0 0,1 14,12A2,2 0 0,1 12,10V5A2,2 0 0,1 14,3A2,2 0 0,1 16,5V10M14,18A2,2 0 0,1 16,20A2,2 0 0,1 14,22A2,2 0 0,1 12,20V18H14M14,17A2,2 0 0,1 12,15A2,2 0 0,1 14,13H19A2,2 0 0,1 21,15A2,2 0 0,1 19,17H14Z"/></svg>
<span style="left:3773.70px;top:454.90px;font-size:30px;line-height:30px;color:#ffffff;transform-origin:0 0;transform:rotate(90deg);letter-spacing:0.100px;">Help</span>
<svg style="left:3748px;top:544px;" width="22" height="22" viewBox="0 0 22 22"><path d="M12.6 21H3A2 2 0 0 1 1 19V3A2 2 0 0 1 3 1H19A2 2 0 0 1 21 3V9.4" fill="none" stroke="#5c6074" stroke-width="1.9"/><path d="M6.6 6.6L19.6 19.6M20 11.6V20H11.6" fill="none" stroke="#5c6074" stroke-width="1.9"/></svg>
<span style="left:3772.85px;top:1544.90px;font-size:29px;line-height:29px;color:#5a5d6e;transform-origin:0 0;transform:rotate(90deg);letter-spacing:-1.100px;">1.1.0-SNAPSHOT</span>
<div style="left:3723px;top:1784px;width:72px;height:64px;background:#2f3342;border:2px solid #404559;border-radius:8px"></div>
<svg style="left:3745px;top:1803px;" width="28" height="28" viewBox="0 0 28 28"><path d="M20.6 3.4C27 8 27.4 19 19.4 23.4C13.4 26.4 6.6 23.6 4.2 18.6C10.4 20.4 15.4 18.4 18.4 13.4C20.4 10 21 6.4 20.6 3.4Z" fill="none" stroke="#fff" stroke-width="2.1" stroke-linejoin="round"/><polygon points="5.40,6.67 7.03,9.49 10.26,9.04 8.08,11.46 9.51,14.40 6.53,13.07 4.18,15.33 4.52,12.09 1.64,10.56 4.83,9.88" fill="#fff"/><polygon points="14.16,2.05 14.54,4.30 16.77,4.75 14.75,5.81 15.00,8.08 13.37,6.48 11.30,7.42 12.31,5.38 10.77,3.70 13.03,4.03" fill="#fff"/></svg>
</body></html>
